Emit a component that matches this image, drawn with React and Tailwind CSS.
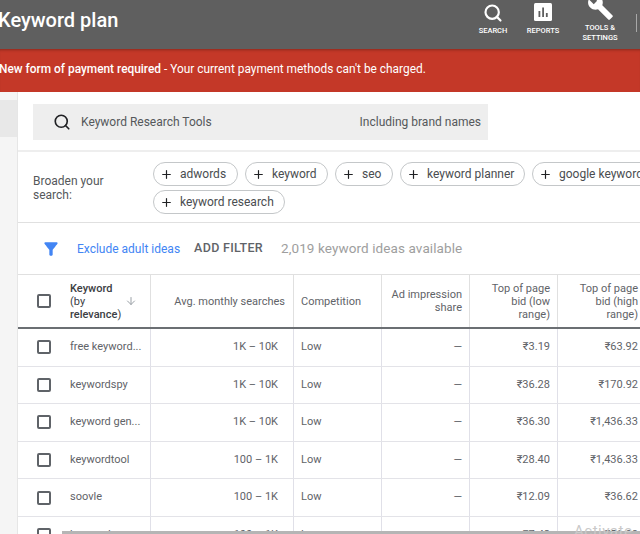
import React from 'react';
import { Search, Plus, ArrowDown } from 'lucide-react';

const chips = [
  { texto: 'adwords', ancho: 'w-[85px]' },
  { texto: 'keyword', ancho: 'w-[83px]' },
  { texto: 'seo', ancho: 'w-[58px]' },
  { texto: 'keyword planner', ancho: 'w-[125px]' },
  { texto: 'google keyword', ancho: 'w-[124px]' },
];

const filas = [
  ['free keyword...', '1K – 10K', '₹3.19', '₹63.92'],
  ['keywordspy', '1K – 10K', '₹36.28', '₹170.92'],
  ['keyword gen...', '1K – 10K', '₹36.30', '₹1,436.33'],
  ['keywordtool', '100 – 1K', '₹28.40', '₹1,436.33'],
  ['soovle', '100 – 1K', '₹12.09', '₹36.62'],
  ['keyword spy', '100 – 1K', '₹7.42', '₹51.08'],
];

const columnas = 'grid grid-cols-[132px_143px_88px_88px_88px_88px] w-[627px]';

function Casilla() {
  return <div className="w-[14px] h-[14px] rounded-[2px] border-2 border-[#5f6368] shrink-0" />;
}

function Chip({ texto, ancho }) {
  return (
    <div className={`${ancho} shrink-0 h-[24px] flex items-center gap-[7px] pl-[6px] rounded-full border border-[#c4c7c9] bg-white text-[12px] text-[#4a4d50] whitespace-nowrap`}>
      <Plus size={13} strokeWidth={2.2} className="text-[#202124] shrink-0" />
      <span>{texto}</span>
    </div>
  );
}

function BotonHeader({ etiqueta, ancho, children }) {
  return (
    <div className={`${ancho} flex flex-col items-center text-white text-[7.5px] font-medium leading-[9.5px] text-center`}>
      <div className="h-[26px] flex items-center justify-center">{children}</div>
      {etiqueta}
    </div>
  );
}

export default function App() {
  return (
    <div className="relative w-[640px] h-[534px] overflow-hidden bg-white font-['Roboto',sans-serif]">
      {/* HEADER */}
      <header className="h-[49px] bg-[#5f5f5f] flex items-start justify-between">
        <h1 className="-ml-[2px] mt-[8px] text-[20px] leading-[24px] font-medium text-white">Keyword plan</h1>
        <div className="flex items-start">
          <BotonHeader etiqueta="SEARCH" ancho="w-[40px]">
            <Search size={20} strokeWidth={2.6} />
          </BotonHeader>
          <div className="w-[10px]" />
          <BotonHeader etiqueta="REPORTS" ancho="w-[40px]">
            <svg width="18" height="18" viewBox="0 0 18 18" className="mt-[-2px]">
              <rect width="18" height="18" rx="1.5" fill="#fff" />
              <rect x="4.5" y="8" width="1.8" height="6" fill="#5f5f5f" />
              <rect x="8.2" y="4.5" width="1.8" height="9.5" fill="#5f5f5f" />
              <rect x="11.9" y="10" width="1.8" height="4" fill="#5f5f5f" />
            </svg>
          </BotonHeader>
          <div className="w-[17px]" />
          <div className="w-[40px] -mt-[6px] flex flex-col items-center text-white text-[7.5px] font-medium leading-[9.5px] text-center">
            <svg width="27" height="27" viewBox="0 0 24 24" fill="#fff">
              <path d="M22.7 19l-9.1-9.1c.9-2.3.4-5-1.5-6.9-2-2-5-2.4-7.4-1.3L9 6 6 9 1.6 4.7C.4 7.1.9 10.1 2.9 12.1c1.9 1.9 4.6 2.4 6.9 1.5l9.1 9.1c.4.4 1 .4 1.4 0l2.3-2.3c.5-.4.5-1.1.1-1.4z" />
            </svg>
            <span className="mt-[2px]">TOOLS &amp;<br />SETTINGS</span>
          </div>
          <div className="w-[1px] h-[18px] mt-[14px] ml-[16px] mr-[3px] bg-[#a8a8a8]" />
        </div>
      </header>

      {/* AVISO */}
      <div className="h-[43px] bg-[#c43828] shadow-[inset_0_3px_3px_-2px_rgba(0,0,0,0.3)] flex items-center pb-[2px] text-[11.9px] text-white whitespace-nowrap">
        <p className="-ml-[1px]"><span className="font-medium">New form of payment required</span> - Your current payment methods can't be charged.</p>
      </div>

      <div className="flex h-[442px]">
        {/* LATERAL */}
        <aside className="w-[18px] shrink-0 bg-[#f5f5f5] border-r border-[#e6e6e6] pt-[8px]">
          <div className="h-[37px] bg-[#e8e8e8]" />
        </aside>

        <main className="flex-1 min-w-0">
          {/* BUSCADOR */}
          <div className="h-[60px] border-b-2 border-[#eeeeee] pl-[15px] pt-[12px]">
            <div className="w-[455px] h-[36px] bg-[#eeeeee] flex items-center justify-between pl-[20px] pr-[7px] text-[12px] text-[#55585b]">
              <div className="flex items-center gap-[10px]">
                <Search size={18} strokeWidth={2.2} className="text-[#202124]" />
                <span>Keyword Research Tools</span>
              </div>
              <span>Including brand names</span>
            </div>
          </div>

          {/* AMPLIAR */}
          <div className="h-[71px] border-b border-[#e0e0e0] flex overflow-hidden">
            <p className="w-[135px] shrink-0 pl-[15px] pt-[22px] text-[12px] leading-[14px] text-[#55585b]">Broaden your<br />search:</p>
            <div className="pt-[10px] flex flex-col gap-[4px]">
              <div className="flex gap-[7px]">
                {chips.map(c => <Chip key={c.texto} texto={c.texto} ancho={c.ancho} />)}
              </div>
              <Chip texto="keyword research" ancho="w-[132px]" />
            </div>
          </div>

          {/* FILTROS */}
          <div className="h-[52px] border-b border-[#e0e0e0] flex items-center whitespace-nowrap">
            <svg width="20" height="20" viewBox="0 0 24 24" fill="#4285f4" className="ml-[23px] shrink-0">
              <path d="M4.25 5.61C6.27 8.2 10 13 10 13v6c0 .55.45 1 1 1h2c.55 0 1-.45 1-1v-6s3.72-4.8 5.74-7.39c.51-.66.04-1.61-.79-1.61H5.04c-.83 0-1.3.95-.79 1.61z" />
            </svg>
            <span className="ml-[16px] text-[12px] text-[#4285f4]">Exclude adult ideas</span>
            <span className="ml-[14px] text-[12.5px] font-medium tracking-[0.3px] text-[#5f6368]">ADD FILTER</span>
            <span className="ml-[18px] text-[13.5px] tracking-[0.1px] text-[#9e9e9e]">2,019 keyword ideas available</span>
          </div>

          {/* TABLA */}
          <div className={`${columnas} h-[54px] border-b-2 border-[#6b6f73] text-[11px] leading-[13px] text-[#5f6368]`}>
            <div className="flex items-center">
              <div className="ml-[19px] mr-[19px]"><Casilla /></div>
              <div className="w-[56px] shrink-0 font-medium text-[#3c4043]">Keyword <span className="font-normal">(by</span> relevance<span className="font-normal">)</span></div>
              <ArrowDown size={12} className="-ml-[1px] text-[#9aa0a6]" />
            </div>
            <div className="border-l border-[#e0e0e0] flex items-center justify-end pr-[8px]">Avg. monthly searches</div>
            <div className="border-l border-[#e0e0e0] flex items-center pl-[7px]">Competition</div>
            <div className="border-l border-[#e0e0e0] flex items-center justify-end text-right pr-[7px]">Ad impression<br />share</div>
            <div className="border-l border-[#e0e0e0] flex items-center justify-end text-right pr-[7px]">Top of page<br />bid (low<br />range)</div>
            <div className="border-l border-[#e0e0e0] flex items-center justify-end text-right pr-[7px]">Top of page<br />bid (high<br />range)</div>
          </div>

          {filas.map(f => (
            <div key={f[0]} className={`${columnas} h-[37.6px] border-b border-[#e3e3e8] text-[11px] text-[#5f6368]`}>
              <div className="flex items-center">
                <div className="ml-[19px] mr-[19px]"><Casilla /></div>
                <span className="whitespace-nowrap">{f[0]}</span>
              </div>
              <div className="border-l border-[#e0e0e8] flex items-center justify-end pr-[15px]">{f[1]}</div>
              <div className="border-l border-[#e0e0e8] flex items-center pl-[7px]">Low</div>
              <div className="border-l border-[#e0e0e8] flex items-center justify-end pr-[7px]">—</div>
              <div className="border-l border-[#e0e0e8] flex items-center justify-end pr-[7px]">{f[2]}</div>
              <div className="border-l border-[#e0e0e8] flex items-center justify-end pr-[7px]">{f[3]}</div>
            </div>
          ))}
        </main>
      </div>

      {/* BARRA DE SCROLL Y MARCA DE AGUA */}
      <div className="absolute left-[62px] right-0 bottom-0 h-[3px] bg-[#b5b5b5]" />
      <span className="absolute left-[574px] top-[523px] text-[15px] leading-[16px] tracking-[0.5px] text-[#c9c9c9]">Activate</span>
    </div>
  );
}
